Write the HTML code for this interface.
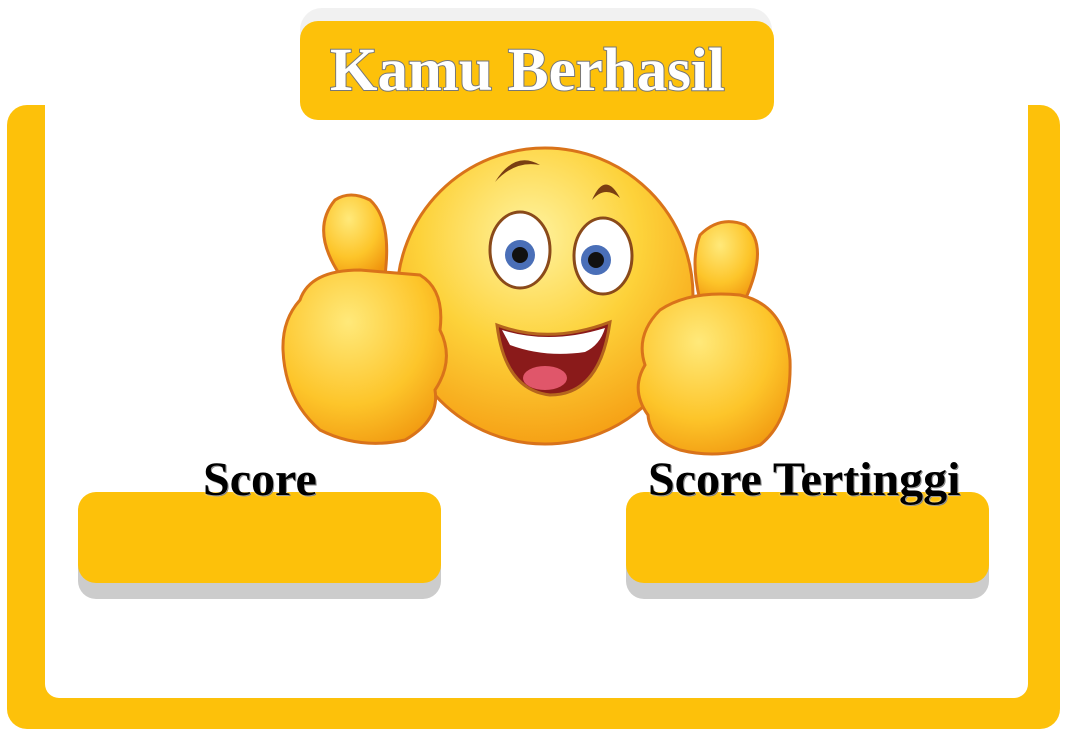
<!DOCTYPE html>
<html><head><style>
body{margin:0;width:1073px;height:737px;background:#fff;position:relative;overflow:hidden;font-family:"Liberation Serif",serif}
.abs{position:absolute}
.y{background:#FDC10A}
.t{font-weight:bold;color:#000;font-size:48px;line-height:48px;text-shadow:0 0 2px #fff,1px 1px 0 #666;white-space:nowrap}
</style></head><body>
<div class="abs y" style="left:7px;top:105px;width:1053px;height:624px;border-radius:20px"></div>
<div class="abs" style="left:45px;top:95px;width:983px;height:603px;background:#fff;border-radius:0 0 14px 14px"></div>
<div class="abs" style="left:300px;top:8px;width:472px;height:100px;background:#f1f1f1;border-radius:22px"></div>
<div class="abs y" style="left:300px;top:21px;width:474px;height:99px;border-radius:18px"></div>
<div class="abs" style="left:330px;top:38px;font-size:61px;line-height:66px;font-weight:bold;color:#fff;-webkit-text-stroke:2px #777;paint-order:stroke fill;white-space:nowrap">Kamu Berhasil</div>

<div class="abs" style="left:78px;top:500px;width:363px;height:99px;background:#ccc;border-radius:18px"></div>
<div class="abs y" style="left:78px;top:492px;width:363px;height:91px;border-radius:18px"></div>
<div class="abs" style="left:626px;top:500px;width:363px;height:99px;background:#ccc;border-radius:18px"></div>
<div class="abs y" style="left:626px;top:492px;width:363px;height:91px;border-radius:18px"></div>
<div class="abs t" style="left:203px;top:456px">Score</div>
<div class="abs t" style="left:648px;top:456px">Score Tertinggi</div>

<svg class="abs" style="left:270px;top:140px" width="540" height="320" viewBox="270 140 540 320">
<defs>
<radialGradient id="f" cx="0.45" cy="0.3" r="0.75"><stop offset="0" stop-color="#fff3a0"/><stop offset="0.5" stop-color="#fdd23a"/><stop offset="1" stop-color="#f59a10"/></radialGradient>
<radialGradient id="h" cx="0.4" cy="0.3" r="0.8"><stop offset="0" stop-color="#ffe97a"/><stop offset="0.6" stop-color="#fdc52a"/><stop offset="1" stop-color="#f0950e"/></radialGradient>
</defs>
<ellipse cx="545" cy="296" rx="148" ry="148" fill="url(#f)" stroke="#d9731a" stroke-width="3"/>
<path d="M335 200 Q350 190 370 200 Q392 220 385 275 L340 275 Q310 230 335 200Z" fill="url(#h)" stroke="#d9731a" stroke-width="3"/>
<path d="M300 300 Q310 270 360 270 L420 275 Q445 290 440 330 Q455 360 435 390 Q440 420 405 440 Q360 450 320 430 Q285 400 283 350 Q282 320 300 300Z" fill="url(#h)" stroke="#d9731a" stroke-width="3"/>
<path d="M700 235 Q720 215 745 225 Q770 245 745 300 L700 300 Q690 260 700 235Z" fill="url(#h)" stroke="#d9731a" stroke-width="3"/>
<path d="M660 310 Q690 290 740 295 Q785 305 790 360 Q792 420 760 445 Q720 460 680 450 Q650 440 648 415 Q630 390 645 365 Q635 335 660 310Z" fill="url(#h)" stroke="#d9731a" stroke-width="3"/>
<ellipse cx="520" cy="250" rx="30" ry="38" fill="#fff" stroke="#8a4a1a" stroke-width="3"/>
<ellipse cx="603" cy="256" rx="29" ry="38" fill="#fff" stroke="#8a4a1a" stroke-width="3"/>
<circle cx="520" cy="255" r="15" fill="#4a6fb8"/><circle cx="520" cy="255" r="8" fill="#111"/>
<circle cx="596" cy="260" r="15" fill="#4a6fb8"/><circle cx="596" cy="260" r="8" fill="#111"/>
<path d="M495 182 Q515 150 540 165 Q515 160 495 182Z" fill="#7a3e12"/>
<path d="M592 200 Q605 170 620 198 Q605 185 592 200Z" fill="#7a3e12"/>
<path d="M497 325 Q550 345 610 322 Q600 395 550 395 Q505 390 497 325Z" fill="#8a1a1a" stroke="#b5651d" stroke-width="3"/>
<path d="M502 330 Q550 345 605 328 Q600 345 585 352 Q545 358 510 345Z" fill="#fff"/>
<ellipse cx="545" cy="378" rx="22" ry="12" fill="#e0566a"/>
</svg>
</body></html>
